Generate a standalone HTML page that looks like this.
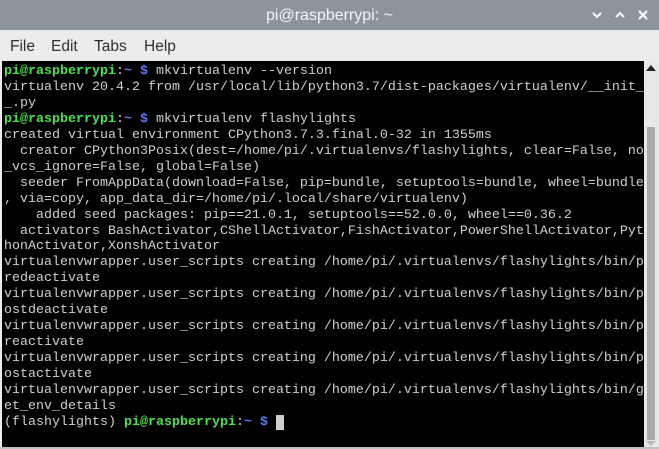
<!DOCTYPE html>
<html><head><style>
body{margin:0;width:659px;height:449px;overflow:hidden;background:#ececec;font-family:"Liberation Sans",sans-serif}
#title{position:absolute;left:0;top:0;width:659px;height:30px;background:#8d959c;color:#f4f4f4;font-size:16px;text-align:center;line-height:31px}
.ctl{position:absolute;top:8px;}
#menu{position:absolute;top:30px;left:0;width:659px;height:31px;background:#ececec;font-size:15.5px;color:#303030}
#menu span{position:absolute;top:8px}
#term{position:absolute;left:2px;top:61px;width:642px;height:386px;background:#000;overflow:hidden}
pre{margin:0;position:absolute;left:2px;top:3px;font-family:"Liberation Mono",monospace;font-size:13.33px;line-height:15.95px;color:#d0d0d0}
.g{color:#4ee04e;font-weight:bold}.b{color:#5b7cf0;font-weight:bold}
#sb{position:absolute;left:644px;top:61px;width:14px;height:386px;background:#e8e8e8}
#thumb{position:absolute;left:3px;top:66px;width:8px;height:313px;background:#a8a8a8;border-radius:1px}
#lb{position:absolute;left:0;top:447px;width:659px;height:2px;background:#c0c0c0}
</style></head><body>
<div id="title">pi@raspberrypi: ~</div>
<svg class="ctl" style="left:590px" width="14" height="14" viewBox="0 0 14 14"><path d="M3 5l4 4 4-4" stroke="#fff" stroke-width="2" fill="none"/></svg>
<svg class="ctl" style="left:613px" width="14" height="14" viewBox="0 0 14 14"><path d="M3 9l4-4 4 4" stroke="#fff" stroke-width="2" fill="none"/></svg>
<svg class="ctl" style="left:636px" width="14" height="14" viewBox="0 0 14 14"><path d="M3 3l8 8M11 3l-8 8" stroke="#fff" stroke-width="2" fill="none"/></svg>
<div id="menu"><span style="left:10px">File</span><span style="left:51px">Edit</span><span style="left:94px">Tabs</span><span style="left:144px">Help</span></div>
<div id="term"><pre><span class="g">pi@raspberrypi</span>:<span class="b">~ $</span> mkvirtualenv --version
virtualenv 20.4.2 from /usr/local/lib/python3.7/dist-packages/virtualenv/__init_
_.py
<span class="g">pi@raspberrypi</span>:<span class="b">~ $</span> mkvirtualenv flashylights
created virtual environment CPython3.7.3.final.0-32 in 1355ms
  creator CPython3Posix(dest=/home/pi/.virtualenvs/flashylights, clear=False, no
_vcs_ignore=False, global=False)
  seeder FromAppData(download=False, pip=bundle, setuptools=bundle, wheel=bundle
, via=copy, app_data_dir=/home/pi/.local/share/virtualenv)
    added seed packages: pip==21.0.1, setuptools==52.0.0, wheel==0.36.2
  activators BashActivator,CShellActivator,FishActivator,PowerShellActivator,Pyt
honActivator,XonshActivator
virtualenvwrapper.user_scripts creating /home/pi/.virtualenvs/flashylights/bin/p
redeactivate
virtualenvwrapper.user_scripts creating /home/pi/.virtualenvs/flashylights/bin/p
ostdeactivate
virtualenvwrapper.user_scripts creating /home/pi/.virtualenvs/flashylights/bin/p
reactivate
virtualenvwrapper.user_scripts creating /home/pi/.virtualenvs/flashylights/bin/p
ostactivate
virtualenvwrapper.user_scripts creating /home/pi/.virtualenvs/flashylights/bin/g
et_env_details
(flashylights) <span class="g">pi@raspberrypi</span>:<span class="b">~ $</span> <span style="background:#d0d0d0">&nbsp;</span></pre></div>
<div id="sb"><svg style="position:absolute;left:2px;top:4px" width="10" height="6"><path d="M0 6L5 0 10 6z" fill="#222"/></svg><div id="thumb"></div><svg style="position:absolute;left:2px;top:380px" width="10" height="5"><path d="M0 0L5 5 10 0z" fill="#bbb"/></svg></div>
<div id="lb"></div>
</body></html>
